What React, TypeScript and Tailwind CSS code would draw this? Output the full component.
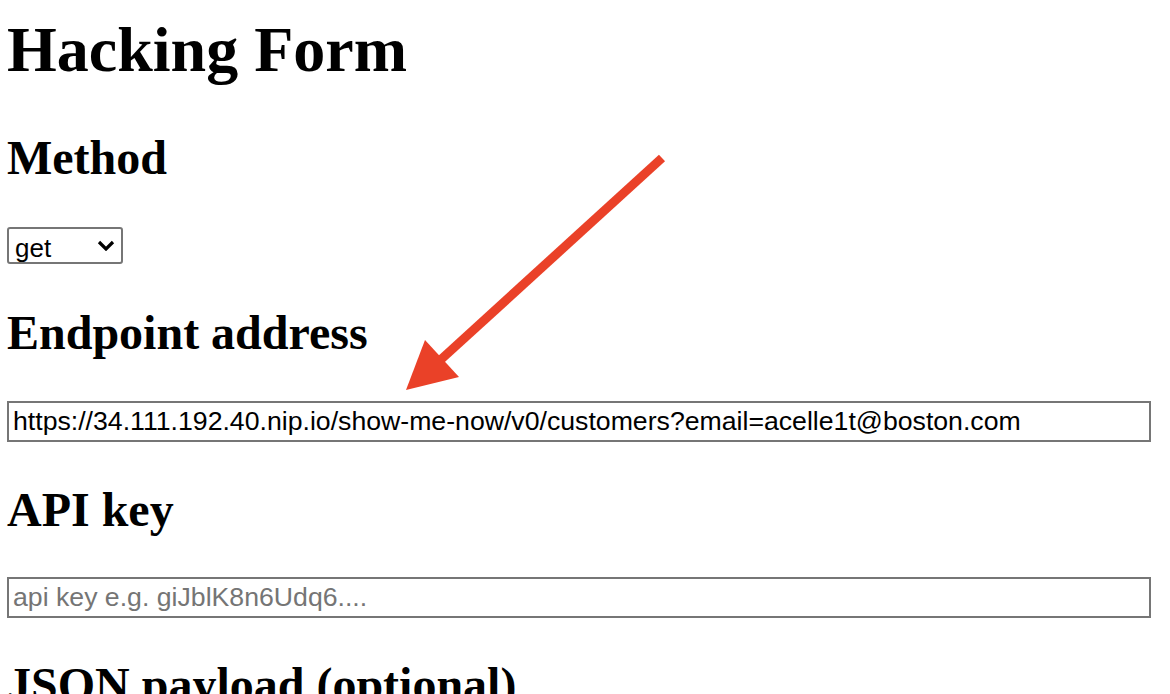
import React from 'react';

const serif = { fontFamily: '"Liberation Serif", "Times New Roman", serif' };

const Heading2: React.FC<{ children: React.ReactNode; className?: string }> = ({ children, className }) => (
  <h2 className={`m-0 text-[48px] leading-[56px] font-bold text-black ${className ?? ''}`} style={serif}>
    {children}
  </h2>
);

export default function App() {
  return (
    <div className="relative w-[1170px] h-[694px] overflow-hidden bg-white pl-[7px] pt-[14px] font-['Liberation_Sans',Arial,sans-serif]">
      <h1 className="m-0 text-[64px] leading-[72px] font-bold text-black" style={serif}>
        Hacking Form
      </h1>

      <Heading2 className="mt-[44px]">Method</Heading2>

      {/* select */}
      <div className="relative mt-[41px] w-[116px] h-[37px]">
        <select
          defaultValue="get"
          className="appearance-none w-full h-full border-2 border-[#767676] rounded-[3px] bg-white pl-[6px] text-[26px] text-black outline-none"
        >
          <option value="get">get</option>
          <option value="post">post</option>
        </select>
        <svg className="pointer-events-none absolute right-[8px] top-[13px]" width="18" height="11" viewBox="0 0 18 11">
          <path d="M2 2 L9 9 L16 2" fill="none" stroke="#000" strokeWidth="3.2" />
        </svg>
      </div>

      <Heading2 className="mt-[41px]">Endpoint address</Heading2>

      <input
        type="text"
        defaultValue="https://34.111.192.40.nip.io/show-me-now/v0/customers?email=acelle1t@boston.com"
        className="block mt-[40px] w-[1144px] h-[41px] border-2 border-[#767676] bg-white pl-[4px] text-[26.67px] text-black outline-none"
      />

      <Heading2 className="mt-[40px]">API key</Heading2>

      <input
        type="text"
        placeholder="api key e.g. giJblK8n6Udq6...."
        className="block mt-[39px] w-[1144px] h-[41px] border-2 border-[#767676] bg-white pl-[4px] text-[26.67px] text-black placeholder:text-[#757575] outline-none"
      />

      <Heading2 className="mt-[39px]">JSON payload (optional)</Heading2>

      {/* red arrow annotation */}
      <svg className="pointer-events-none absolute left-0 top-0" width="1170" height="694" viewBox="0 0 1170 694">
        <line x1="662" y1="158" x2="436" y2="364" stroke="#EA4128" strokeWidth="9" />
        <polygon points="406,390 425,340 459,377" fill="#EA4128" />
      </svg>
    </div>
  );
}
